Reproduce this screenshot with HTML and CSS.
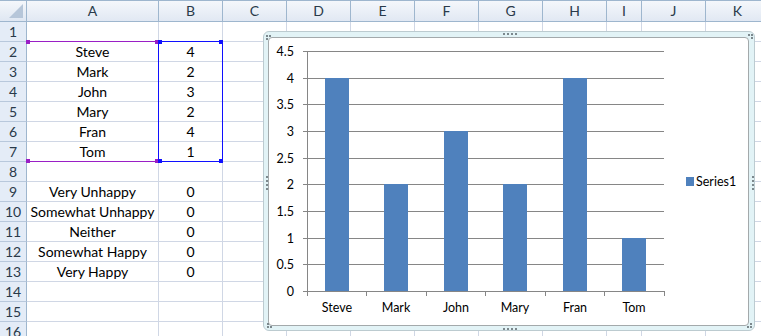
FILE: index.html
```html
<!DOCTYPE html>
<html lang="en">
<head>
  <meta charset="UTF-8" />
  <title>Book1 - Chart</title>
  <link rel="stylesheet" href="styles.css">
</head>
<body>

  <div class="sheet">
    <!-- cells get built by the script below -->
    <div class="grid" id="grid"></div>

    <!-- range highlight for the chart data -->
    <div class="range-names"></div>
    <div class="range-values"></div>
    <span class="hnd purple" style="left:26px; top:40px"></span>
    <span class="hnd purple" style="left:155px; top:40px"></span>
    <span class="hnd purple" style="left:26px; top:159px"></span>
    <span class="hnd purple" style="left:155px; top:159px"></span>
    <span class="hnd blue" style="left:158px; top:40px"></span>
    <span class="hnd blue" style="left:219px; top:40px"></span>
    <span class="hnd blue" style="left:158px; top:159px"></span>
    <span class="hnd blue" style="left:219px; top:159px"></span>

    <!-- embedded chart -->
    <div class="chart">
      <div class="chart-inner">
        <svg class="plot" width="479" height="287" viewBox="0 0 479 287">
          <g class="gridlines">
            <line x1="34" x2="395" y1="13.5" y2="13.5"/>
            <line x1="34" x2="395" y1="40.5" y2="40.5"/>
            <line x1="34" x2="395" y1="66.5" y2="66.5"/>
            <line x1="34" x2="395" y1="93.5" y2="93.5"/>
            <line x1="34" x2="395" y1="120.5" y2="120.5"/>
            <line x1="34" x2="395" y1="146.5" y2="146.5"/>
            <line x1="34" x2="395" y1="173.5" y2="173.5"/>
            <line x1="34" x2="395" y1="200.5" y2="200.5"/>
            <line x1="34" x2="395" y1="226.5" y2="226.5"/>
          </g>
          <g class="bars">
            <rect x="56" y="40" width="24" height="213"/>
            <rect x="115" y="146" width="24" height="107"/>
            <rect x="175" y="93" width="24" height="160"/>
            <rect x="234" y="146" width="24" height="107"/>
            <rect x="294" y="40" width="24" height="213"/>
            <rect x="353" y="200" width="24" height="53"/>
          </g>
          <g class="axis">
            <line x1="38.5" x2="38.5" y1="13" y2="253"/>
            <line x1="34" x2="395.5" y1="253.5" y2="253.5"/>
            <line x1="97.5" x2="97.5" y1="253" y2="258"/>
            <line x1="157.5" x2="157.5" y1="253" y2="258"/>
            <line x1="216.5" x2="216.5" y1="253" y2="258"/>
            <line x1="276.5" x2="276.5" y1="253" y2="258"/>
            <line x1="335.5" x2="335.5" y1="253" y2="258"/>
            <line x1="395.5" x2="395.5" y1="253" y2="258"/>
            <line x1="38.5" x2="38.5" y1="253" y2="258"/>
          </g>
          <g class="ylabels">
            <text x="25" y="18">4.5</text>
            <text x="25" y="45">4</text>
            <text x="25" y="71">3.5</text>
            <text x="25" y="98">3</text>
            <text x="25" y="125">2.5</text>
            <text x="25" y="151">2</text>
            <text x="25" y="178">1.5</text>
            <text x="25" y="205">1</text>
            <text x="25" y="231">0.5</text>
            <text x="25" y="258">0</text>
          </g>
          <g class="xlabels">
            <text x="68" y="274">Steve</text>
            <text x="127" y="274">Mark</text>
            <text x="187" y="274">John</text>
            <text x="246" y="274">Mary</text>
            <text x="306" y="274">Fran</text>
            <text x="365" y="274">Tom</text>
          </g>
          <rect class="legend-key" x="417" y="139" width="8" height="9"/>
          <text class="legend" x="427" y="148">Series1</text>
        </svg>
      </div>

      <!-- sizing grips -->
      <svg class="grip" style="left:2px; top:3px" width="5" height="5"><rect x="0" y="0" width="2" height="2"/><rect x="3" y="0" width="2" height="2"/><rect x="0" y="3" width="2" height="2"/></svg>
      <svg class="grip" style="left:484px; top:2px" width="5" height="5"><rect x="0" y="0" width="2" height="2"/><rect x="3" y="0" width="2" height="2"/><rect x="3" y="3" width="2" height="2"/></svg>
      <svg class="grip" style="left:3px; top:291px" width="5" height="5"><rect x="0" y="0" width="2" height="2"/><rect x="0" y="3" width="2" height="2"/><rect x="3" y="3" width="2" height="2"/></svg>
      <svg class="grip" style="left:483px; top:291px" width="5" height="5"><rect x="3" y="0" width="2" height="2"/><rect x="0" y="3" width="2" height="2"/><rect x="3" y="3" width="2" height="2"/></svg>
      <svg class="grip" style="left:239px; top:1px" width="14" height="2"><rect x="0" width="2" height="2"/><rect x="4" width="2" height="2"/><rect x="8" width="2" height="2"/><rect x="12" width="2" height="2"/></svg>
      <svg class="grip" style="left:239px; top:296px" width="14" height="2"><rect x="0" width="2" height="2"/><rect x="4" width="2" height="2"/><rect x="8" width="2" height="2"/><rect x="12" width="2" height="2"/></svg>
      <svg class="grip" style="left:2px; top:144px" width="2" height="14"><rect y="0" width="2" height="2"/><rect y="4" width="2" height="2"/><rect y="8" width="2" height="2"/><rect y="12" width="2" height="2"/></svg>
      <svg class="grip" style="left:488px; top:144px" width="2" height="14"><rect y="0" width="2" height="2"/><rect y="4" width="2" height="2"/><rect y="8" width="2" height="2"/><rect y="12" width="2" height="2"/></svg>
    </div>
  </div>

  <script>
    const cols = ['A', 'B', 'C', 'D', 'E', 'F', 'G', 'H', 'I', 'J', 'K'];
    const cells = {
      2: ['Steve', 4], 3: ['Mark', 2], 4: ['John', 3], 5: ['Mary', 2],
      6: ['Fran', 4], 7: ['Tom', 1],
      9: ['Very Unhappy', 0], 10: ['Somewhat Unhappy', 0], 11: ['Neither', 0],
      12: ['Somewhat Happy', 0], 13: ['Very Happy', 0]
    };

    const grid = document.getElementById('grid');
    let html = '<div class="corner"></div>';
    cols.forEach(c => { html += `<div class="colhead">${c}</div>`; });

    for (let r = 1; r <= 16; r++) {
      html += `<div class="rowhead">${r}</div>`;
      const row = cells[r] || [];
      cols.forEach((c, i) => {
        const val = row[i] !== undefined ? row[i] : '';
        html += `<div class="cell">${val}</div>`;
      });
    }
    grid.innerHTML = html;
  </script>

</body>
</html>
```

FILE: styles.css
```css
body {
  margin: 0;
  background: #fff;
  font-family: "Lato", "Liberation Sans", sans-serif;
  overflow: hidden;
}
.sheet {
  position: relative;
  width: 761px;
  height: 336px;
  overflow: hidden;
}
.grid {
  display: grid;
  grid-template-columns: 27px 132px 64px 64px 64px 64px 64px 64px 64px 35px 64px 64px;
  grid-template-rows: 22px;
  grid-auto-rows: 20px;
}
.grid > div {
  box-sizing: border-box;
  border-right: 1px solid #d0d7e5;
  border-bottom: 1px solid #d0d7e5;
  text-align: center;
  font-size: 14px;
  line-height: 19px;
  color: #000;
  white-space: nowrap;
  overflow: visible;
}
.corner {
  position: relative;
  background: linear-gradient(#f4f7fb, #dfe7f2);
  border-top: 1px solid #9eb6ce;
  border-right-color: #9eb6ce !important;
  border-bottom-color: #9eb6ce !important;
}
.corner::after {
  content: "";
  position: absolute;
  right: 3px;
  bottom: 3px;
  border-left: 14px solid transparent;
  border-bottom: 14px solid #b6c6d9;
}
.grid > .colhead {
  background: linear-gradient(#f4f7fb, #e1e8f3);
  border-top: 1px solid #9eb6ce;
  border-right-color: #9eb6ce;
  border-bottom-color: #9eb6ce;
  color: #2a3a4a;
  line-height: 20px;
}
.grid > .rowhead {
  background: #e4ecf7;
  border-right-color: #9eb6ce;
  border-bottom-color: #b8c8dc;
  color: #2a3a4a;
}

/* data range outlines */
.range-names {
  position: absolute;
  left: 27px;
  top: 41px;
  width: 131px;
  height: 119px;
  border-top: 1px solid #9a1fc6;
  border-bottom: 1px solid #9a1fc6;
}
.range-values {
  position: absolute;
  left: 158px;
  top: 41px;
  width: 63px;
  height: 119px;
  border: 1px solid #1010ff;
}
.hnd {
  position: absolute;
  width: 4px;
  height: 4px;
}
.hnd.purple { background: #9a1fc6; }
.hnd.blue { background: #1010ff; }

/* chart object */
.chart {
  position: absolute;
  left: 263px;
  top: 31px;
  width: 492px;
  height: 300px;
  box-sizing: border-box;
  padding: 5px 5px 4px 4px;
  background: #e2f3f6;
  border: 1px solid #bccbd0;
  border-radius: 6px;
}
.chart-inner {
  height: 100%;
  box-sizing: border-box;
  background: #fff;
  border: 1px solid #a3a9ab;
  border-radius: 4px;
  overflow: hidden;
}
.plot {
  display: block;
  font-family: "Lato", "Liberation Sans", sans-serif;
  font-size: 12.5px;
  fill: #000;
}
.gridlines line, .axis line {
  stroke: #868686;
  stroke-width: 1;
}
.bars rect, .legend-key {
  fill: #4f81bd;
}
.ylabels text { text-anchor: end; }
.xlabels text { text-anchor: middle; }
.grip {
  position: absolute;
  fill: #7c888d;
}
```
